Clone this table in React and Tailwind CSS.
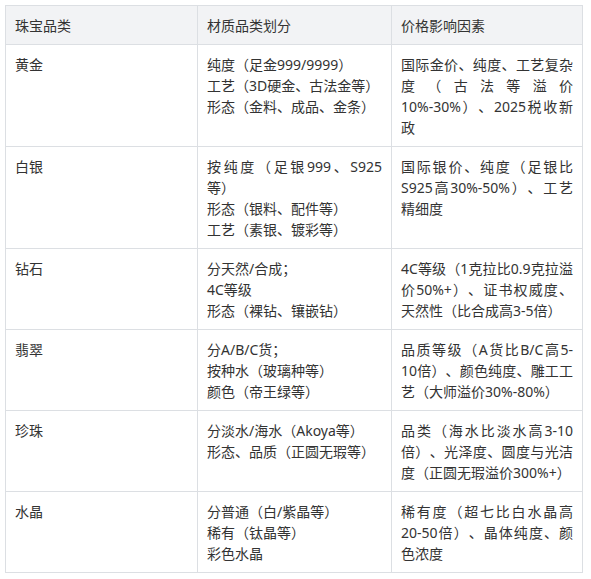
import React from 'react';

const rows = [
  {
    name: '黄金',
    types: ['纯度（足金999/9999）', '工艺（3D硬金、古法金等）', '形态（金料、成品、金条）'],
    price: '国际金价、纯度、工艺复杂度（古法等溢价10%-30%）、2025税收新政',
  },
  {
    name: '白银',
    types: ['按纯度（足银999、S925等）', '形态（银料、配件等）', '工艺（素银、镀彩等）'],
    price: '国际银价、纯度（足银比S925高30%-50%）、工艺精细度',
  },
  {
    name: '钻石',
    types: ['分天然/合成；', '4C等级', '形态（裸钻、镶嵌钻）'],
    price: '4C等级（1克拉比0.9克拉溢价50%+）、证书权威度、天然性（比合成高3-5倍）',
  },
  {
    name: '翡翠',
    types: ['分A/B/C货；', '按种水（玻璃种等）', '颜色（帝王绿等）'],
    price: '品质等级（A货比B/C高5-10倍）、颜色纯度、雕工工艺（大师溢价30%-80%）',
  },
  {
    name: '珍珠',
    types: ['分淡水/海水（Akoya等）', '形态、品质（正圆无瑕等）'],
    price: '品类（海水比淡水高3-10倍）、光泽度、圆度与光洁度（正圆无瑕溢价300%+）',
  },
  {
    name: '水晶',
    types: ['分普通（白/紫晶等）', '稀有（钛晶等）', '彩色水晶'],
    price: '稀有度（超七比白水晶高20-50倍）、晶体纯度、颜色浓度',
  },
];

const cell = 'border border-[#dcdfe3] px-[9px] pt-[9px] pb-[8px] align-top text-justify';

export default function App() {
  return (
    <div className="min-h-screen bg-white pt-[5px] pl-[5px]">
      <table
        className="w-[577px] table-fixed border-collapse text-[14px] leading-[21px] text-[#333333] [text-spacing-trim:space-all]"
        style={{ fontFamily: '"Noto Sans", "Noto Sans CJK SC", sans-serif' }}
      >
        <colgroup>
          <col className="w-[192px]" />
          <col className="w-[194px]" />
          <col className="w-[191px]" />
        </colgroup>
        <thead>
          <tr className="bg-[#f2f3f5]">
            <th className={cell + ' text-left font-normal'}>珠宝品类</th>
            <th className={cell + ' text-left font-normal'}>材质品类划分</th>
            <th className={cell + ' text-left font-normal'}>价格影响因素</th>
          </tr>
        </thead>
        <tbody>
          {rows.map((r) => (
            <tr key={r.name}>
              <td className={cell}>{r.name}</td>
              <td className={cell}>
                {r.types.map((t, i) => (
                  <div key={i}>{t}</div>
                ))}
              </td>
              <td className={cell}>{r.price}</td>
            </tr>
          ))}
        </tbody>
      </table>
    </div>
  );
}
